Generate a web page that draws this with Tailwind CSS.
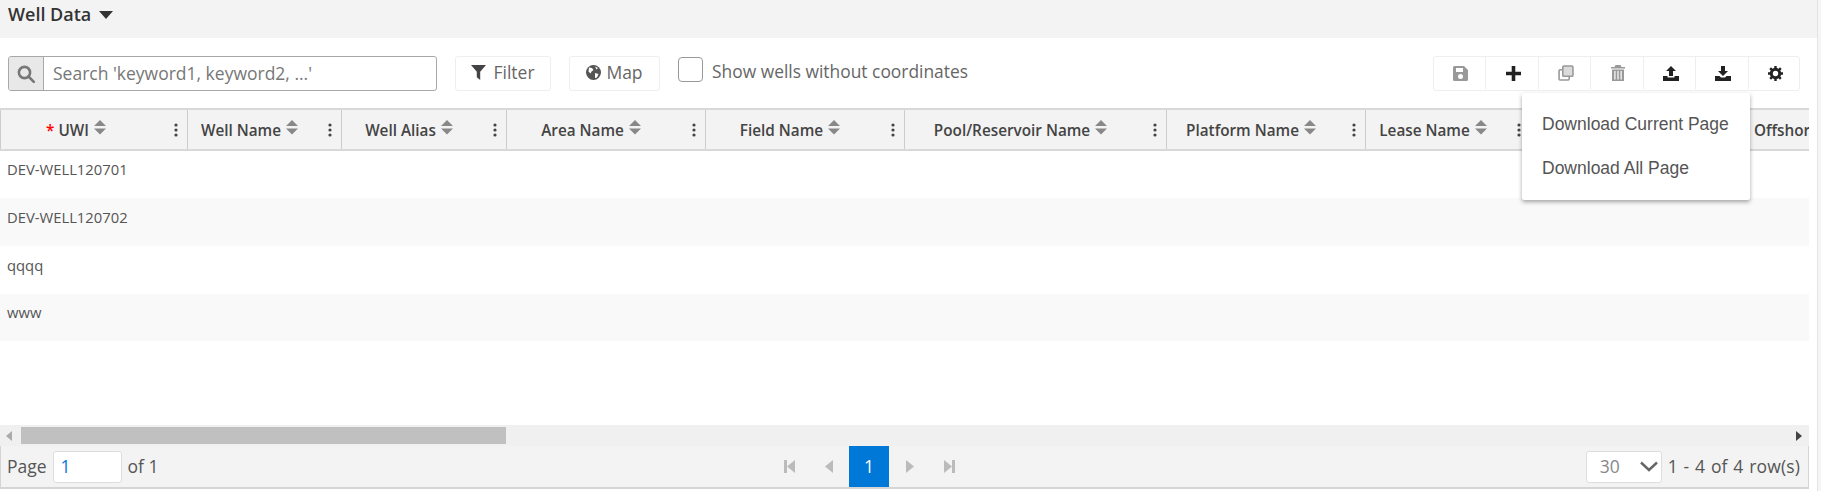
<!DOCTYPE html>
<html>
<head>
<meta charset="utf-8">
<title>Well Data</title>
<script src="https://cdn.jsdelivr.net/npm/@tailwindcss/browser@4"></script>
</head>
<body class="bg-white font-['Open_Sans',sans-serif] text-[#555] overflow-hidden">
<div class="relative w-[1821px] h-[491px] overflow-hidden">

  <!-- title bar -->
  <div class="h-[38px] bg-[#f3f3f3] flex items-center pl-2 pb-[9px] gap-2">
    <span class="text-[18px] font-semibold text-[#333]">Well Data</span>
    <svg width="14" height="8" viewBox="0 0 14 8"><path d="M0 0h14L7 8z" fill="#333"/></svg>
  </div>

  <!-- toolbar -->
  <div class="h-[70px] flex items-start pt-[18px] pl-2 pr-[21px]">
    <div class="flex w-[429px] h-[35px] border border-[#a8a8a8] rounded-[3px] overflow-hidden">
      <div class="w-[35px] bg-[#e8e8e8] border-r border-[#a8a8a8] flex items-center justify-center">
        <svg width="18" height="18" viewBox="0 0 18 18" fill="none" stroke="#777" stroke-width="2.6"><circle cx="7.5" cy="7.5" r="5.6"/><path d="M11.5 11.5l5.3 5.3" stroke-linecap="round"/></svg>
      </div>
      <div class="flex-1 flex items-center pl-[9px] text-[17.5px] text-[#777] whitespace-nowrap">Search 'keyword1, keyword2, ...'</div>
    </div>
    <div class="ml-[18px] w-[96px] h-[35px] border border-[#eee] rounded-[3px] flex items-center justify-center gap-[7px] text-[17.5px] text-[#666] pb-[2px]">
      <svg width="15" height="15" viewBox="0 0 14 14"><path d="M0 0h14L8.6 6.3V14L5.4 11.4V6.3z" fill="#444"/></svg>
      Filter
    </div>
    <div class="ml-[18px] w-[91px] h-[35px] border border-[#eee] rounded-[3px] flex items-center justify-center gap-[5px] text-[17.5px] text-[#666] pb-[2px]">
      <svg width="15" height="15" viewBox="0 0 15 15"><circle cx="7.5" cy="7.5" r="7.5" fill="#555"/><path d="M3 2.500l3 .5 1.500 2-2 1.500-1 2-2-2zM9 8l3.500 1-1.500 3.500-2 .5zM9 1.500l3 1.500-1.500 1.500z" fill="#fff"/></svg>
      Map
    </div>
    <div class="ml-[18px] w-[25px] h-[25px] mt-[1px] border border-[#999] rounded-[4px] bg-white"></div>
    <div class="ml-[9px] text-[17.4px] text-[#666] mt-[2px] whitespace-nowrap">Show wells without coordinates</div>

    <div class="ml-auto flex h-[35px] border border-[#eee] rounded-[3px] pb-[1px]">
      <div class="w-[52px] pl-[2px] flex items-center justify-center border-r border-[#eee]">
        <svg width="15" height="15" viewBox="0 0 15 15"><path d="M0 1.500A1.500 1.500 0 0 1 1.500 0H11l4 4v9.500A1.500 1.500 0 0 1 13.500 15h-12A1.500 1.500 0 0 1 0 13.500zM3 2v4h7V2zM7.500 8a2.500 2.500 0 1 0 0 5 2.500 2.500 0 0 0 0-5z" fill="#999" fill-rule="evenodd"/></svg>
      </div>
      <div class="w-[53px] pl-[2px] flex items-center justify-center border-r border-[#eee]">
        <svg width="15" height="15" viewBox="0 0 15 15"><path d="M5.700 0h3.600v5.700H15v3.600H9.300V15H5.700V9.300H0V5.700h5.700z" fill="#222"/></svg>
      </div>
      <div class="w-[52px] pl-[2px] flex items-center justify-center border-r border-[#eee]">
        <svg width="16" height="16" viewBox="0 0 15 15" fill="none" stroke="#999" stroke-width="1.500"><rect x="4.500" y="1" width="9.500" height="9.500" rx="1" fill="#999" fill-opacity=".35"/><path d="M4.500 4.500H2a1 1 0 0 0-1 1V13a1 1 0 0 0 1 1h7.500a1 1 0 0 0 1-1v-2.500"/></svg>
      </div>
      <div class="w-[53px] pl-[2px] flex items-center justify-center border-r border-[#eee]">
        <svg width="14" height="16" viewBox="0 0 14 16"><path d="M4.500 0h5l1 2H14v1.500H0V2h3.500zM1 4.500h12V16H1zM3.300 6v8.500h1.200V6zM6.400 6v8.500h1.200V6zM9.500 6v8.500h1.200V6z" fill="#999" fill-rule="evenodd"/></svg>
      </div>
      <div class="w-[52px] pl-[2px] flex items-center justify-center border-r border-[#eee]">
        <svg width="16" height="15" viewBox="0 0 16 15"><path d="M8 0l5 5H10v5H6V5H3zM0 10h4.500v1.500h7V10H16v5H0z" fill="#222"/></svg>
      </div>
      <div class="w-[53px] pl-[2px] flex items-center justify-center border-r border-[#eee]">
        <svg width="16" height="15" viewBox="0 0 16 15"><path d="M6 0h4v5h3l-5 5-5-5h3zM0 10h4.500L6 11.500h4L11.500 10H16v5H0z" fill="#222"/></svg>
      </div>
      <div class="w-[50px] pl-[2px] flex items-center justify-center">
        <svg width="15" height="15" viewBox="0 0 15 15"><circle cx="7.5" cy="7.5" r="4.200" fill="none" stroke="#222" stroke-width="3"/><path d="M7.500 0v15M0 7.500h15M2.200 2.200l10.600 10.600M12.800 2.200L2.200 12.800" stroke="#222" stroke-width="2.400" stroke-dasharray="2.600 10"/></svg>
      </div>
    </div>
  </div>

  <!-- grid -->
  <div class="w-[1809px] overflow-hidden">
    <div class="flex h-[43px] w-[1809px] bg-[#f3f3f3] border-t-2 border-b-2 border-[#d8d8d8] text-[15.3px] font-semibold text-[#444]">
      <div class="w-[188px] shrink-0 flex items-center justify-center border-x border-[#ccc] pr-[36px] pt-[1px] gap-[5px] relative">
        <span><span class="text-[#f00]">*</span> UWI</span>
        <svg class="mb-[5px]" width="12" height="15" viewBox="0 0 12 15" fill="#888"><path d="M6 0l6 6H0zM0 8.500h12l-6 6z"/></svg>
        <svg class="absolute right-[9px]" width="4" height="14" viewBox="0 0 4 14" fill="#444"><circle cx="2" cy="2" r="1.600"/><circle cx="2" cy="7" r="1.600"/><circle cx="2" cy="12" r="1.600"/></svg>
      </div>
      <div class="w-[154px] shrink-0 flex items-center justify-center border-r border-[#ccc] pr-[30px] pt-[1px] gap-[5px] relative">
        <span>Well Name</span>
        <svg class="mb-[5px]" width="12" height="15" viewBox="0 0 12 15" fill="#888"><path d="M6 0l6 6H0zM0 8.500h12l-6 6z"/></svg>
        <svg class="absolute right-[9px]" width="4" height="14" viewBox="0 0 4 14" fill="#444"><circle cx="2" cy="2" r="1.600"/><circle cx="2" cy="7" r="1.600"/><circle cx="2" cy="12" r="1.600"/></svg>
      </div>
      <div class="w-[165px] shrink-0 flex items-center justify-center border-r border-[#ccc] pr-[30px] pt-[1px] gap-[5px] relative">
        <span>Well Alias</span>
        <svg class="mb-[5px]" width="12" height="15" viewBox="0 0 12 15" fill="#888"><path d="M6 0l6 6H0zM0 8.500h12l-6 6z"/></svg>
        <svg class="absolute right-[9px]" width="4" height="14" viewBox="0 0 4 14" fill="#444"><circle cx="2" cy="2" r="1.600"/><circle cx="2" cy="7" r="1.600"/><circle cx="2" cy="12" r="1.600"/></svg>
      </div>
      <div class="w-[199px] shrink-0 flex items-center justify-center border-r border-[#ccc] pr-[30px] pt-[1px] gap-[5px] relative">
        <span>Area Name</span>
        <svg class="mb-[5px]" width="12" height="15" viewBox="0 0 12 15" fill="#888"><path d="M6 0l6 6H0zM0 8.500h12l-6 6z"/></svg>
        <svg class="absolute right-[9px]" width="4" height="14" viewBox="0 0 4 14" fill="#444"><circle cx="2" cy="2" r="1.600"/><circle cx="2" cy="7" r="1.600"/><circle cx="2" cy="12" r="1.600"/></svg>
      </div>
      <div class="w-[199px] shrink-0 flex items-center justify-center border-r border-[#ccc] pr-[30px] pt-[1px] gap-[5px] relative">
        <span>Field Name</span>
        <svg class="mb-[5px]" width="12" height="15" viewBox="0 0 12 15" fill="#888"><path d="M6 0l6 6H0zM0 8.500h12l-6 6z"/></svg>
        <svg class="absolute right-[9px]" width="4" height="14" viewBox="0 0 4 14" fill="#444"><circle cx="2" cy="2" r="1.600"/><circle cx="2" cy="7" r="1.600"/><circle cx="2" cy="12" r="1.600"/></svg>
      </div>
      <div class="w-[262px] shrink-0 flex items-center justify-center border-r border-[#ccc] pr-[30px] pt-[1px] gap-[5px] relative">
        <span>Pool/Reservoir Name</span>
        <svg class="mb-[5px]" width="12" height="15" viewBox="0 0 12 15" fill="#888"><path d="M6 0l6 6H0zM0 8.500h12l-6 6z"/></svg>
        <svg class="absolute right-[9px]" width="4" height="14" viewBox="0 0 4 14" fill="#444"><circle cx="2" cy="2" r="1.600"/><circle cx="2" cy="7" r="1.600"/><circle cx="2" cy="12" r="1.600"/></svg>
      </div>
      <div class="w-[199px] shrink-0 flex items-center justify-center border-r border-[#ccc] pr-[30px] pt-[1px] gap-[5px] relative">
        <span>Platform Name</span>
        <svg class="mb-[5px]" width="12" height="15" viewBox="0 0 12 15" fill="#888"><path d="M6 0l6 6H0zM0 8.500h12l-6 6z"/></svg>
        <svg class="absolute right-[9px]" width="4" height="14" viewBox="0 0 4 14" fill="#444"><circle cx="2" cy="2" r="1.600"/><circle cx="2" cy="7" r="1.600"/><circle cx="2" cy="12" r="1.600"/></svg>
      </div>
      <div class="w-[165px] shrink-0 flex items-center justify-center border-r border-[#ccc] pr-[30px] pt-[1px] gap-[5px] relative">
        <span>Lease Name</span>
        <svg class="mb-[5px]" width="12" height="15" viewBox="0 0 12 15" fill="#888"><path d="M6 0l6 6H0zM0 8.500h12l-6 6z"/></svg>
        <svg class="absolute right-[9px]" width="4" height="14" viewBox="0 0 4 14" fill="#444"><circle cx="2" cy="2" r="1.600"/><circle cx="2" cy="7" r="1.600"/><circle cx="2" cy="12" r="1.600"/></svg>
      </div>
      <div class="flex-1 flex items-center pl-[223px] pt-[1px] whitespace-nowrap">
        <span>Offshor</span>
      </div>
    </div>

    <!-- rows -->
    <div class="h-[274px] text-[14.8px] text-[#555]">
      <div class="h-[47px] bg-white pl-[7px] pt-[7px]">DEV-WELL120701</div>
      <div class="h-[48px] bg-[#f9f9f9] pl-[7px] pt-[8px]">DEV-WELL120702</div>
      <div class="h-[48px] bg-white pl-[7px] pt-[8px]">qqqq</div>
      <div class="h-[47px] bg-[#f9f9f9] pl-[7px] pt-[7px]">www</div>
    </div>
  </div>

  <!-- horizontal scrollbar -->
  <div class="w-[1809px] h-[21px] bg-[#f0f0f0] flex items-center">
    <svg class="ml-[6px]" width="6" height="10" viewBox="0 0 6 10" fill="#aaa"><path d="M6 0v10L0 5z"/></svg>
    <div class="ml-[9px] w-[485px] h-[17px] bg-[#c0c0c0]"></div>
    <svg class="ml-auto mr-[7px]" width="6" height="10" viewBox="0 0 6 10" fill="#444"><path d="M0 0v10l6-5z"/></svg>
  </div>

  <!-- pager -->
  <div class="relative w-[1809px] h-[43px] bg-[#f3f3f3] border-l border-r border-b-2 border-[#d4d4d4] flex items-center justify-between text-[17.5px] pl-[6px] pr-[8px]">
    <div class="flex items-center gap-[6px]">
      <span>Page</span>
      <div class="w-[69px] h-[32px] bg-white border border-[#ddd] rounded-[3px] flex items-center pl-[7px] text-[#0078d7]">1</div>
      <span>of 1</span>
    </div>
    <div class="absolute left-[783px] top-0 h-[41px] flex items-center">
      <svg class="mr-[30px]" width="11" height="13" viewBox="0 0 11 13" fill="#bbb"><path d="M0 0h3v13H0zM11 0v13L3 6.500z"/></svg>
      <svg class="mr-[16px]" width="8" height="13" viewBox="0 0 8 13" fill="#bbb"><path d="M8 0v13L0 6.500z"/></svg>
      <div class="w-[40px] h-[41px] bg-[#0078d7] text-white flex items-center justify-center">1</div>
      <svg class="ml-[17px]" width="8" height="13" viewBox="0 0 8 13" fill="#bbb"><path d="M0 0v13l8-6.500z"/></svg>
      <svg class="ml-[30px]" width="11" height="13" viewBox="0 0 11 13" fill="#bbb"><path d="M0 0v13l8-6.500zM8 0h3v13H8z"/></svg>
    </div>
    <div class="flex items-center gap-[6px]">
      <div class="w-[76px] h-[32px] bg-white border border-[#ddd] rounded-[3px] flex items-center justify-between pl-[13px] pr-[2px] text-[#888]">
        <span>30</span>
        <svg width="20" height="11" viewBox="0 0 20 11" fill="none" stroke="#666" stroke-width="2.400"><path d="M2 1.500l8 7.500 8-7.500"/></svg>
      </div>
      <span class="[word-spacing:1px] tracking-[0.15px] whitespace-nowrap">1 - 4 of 4 row(s)</span>
    </div>
  </div>

  <!-- download menu -->
  <div class="absolute left-[1522px] top-[93px] w-[228px] h-[107px] bg-white rounded-[2px] shadow-[0_2px_4px_rgba(0,0,0,0.35)] font-['Liberation_Sans',sans-serif] text-[17.5px] text-[#555] pt-[9px]">
    <div class="h-[44px] flex items-center pl-[20px] whitespace-nowrap">Download Current Page</div>
    <div class="h-[44px] flex items-center pl-[20px] whitespace-nowrap">Download All Page</div>
  </div>

  <!-- page edge -->
  <div class="absolute right-0 top-0 w-[4px] h-full bg-[#f5f5f5] border-l border-[#e4e4e4]"></div>
</div>
</body>
</html>
